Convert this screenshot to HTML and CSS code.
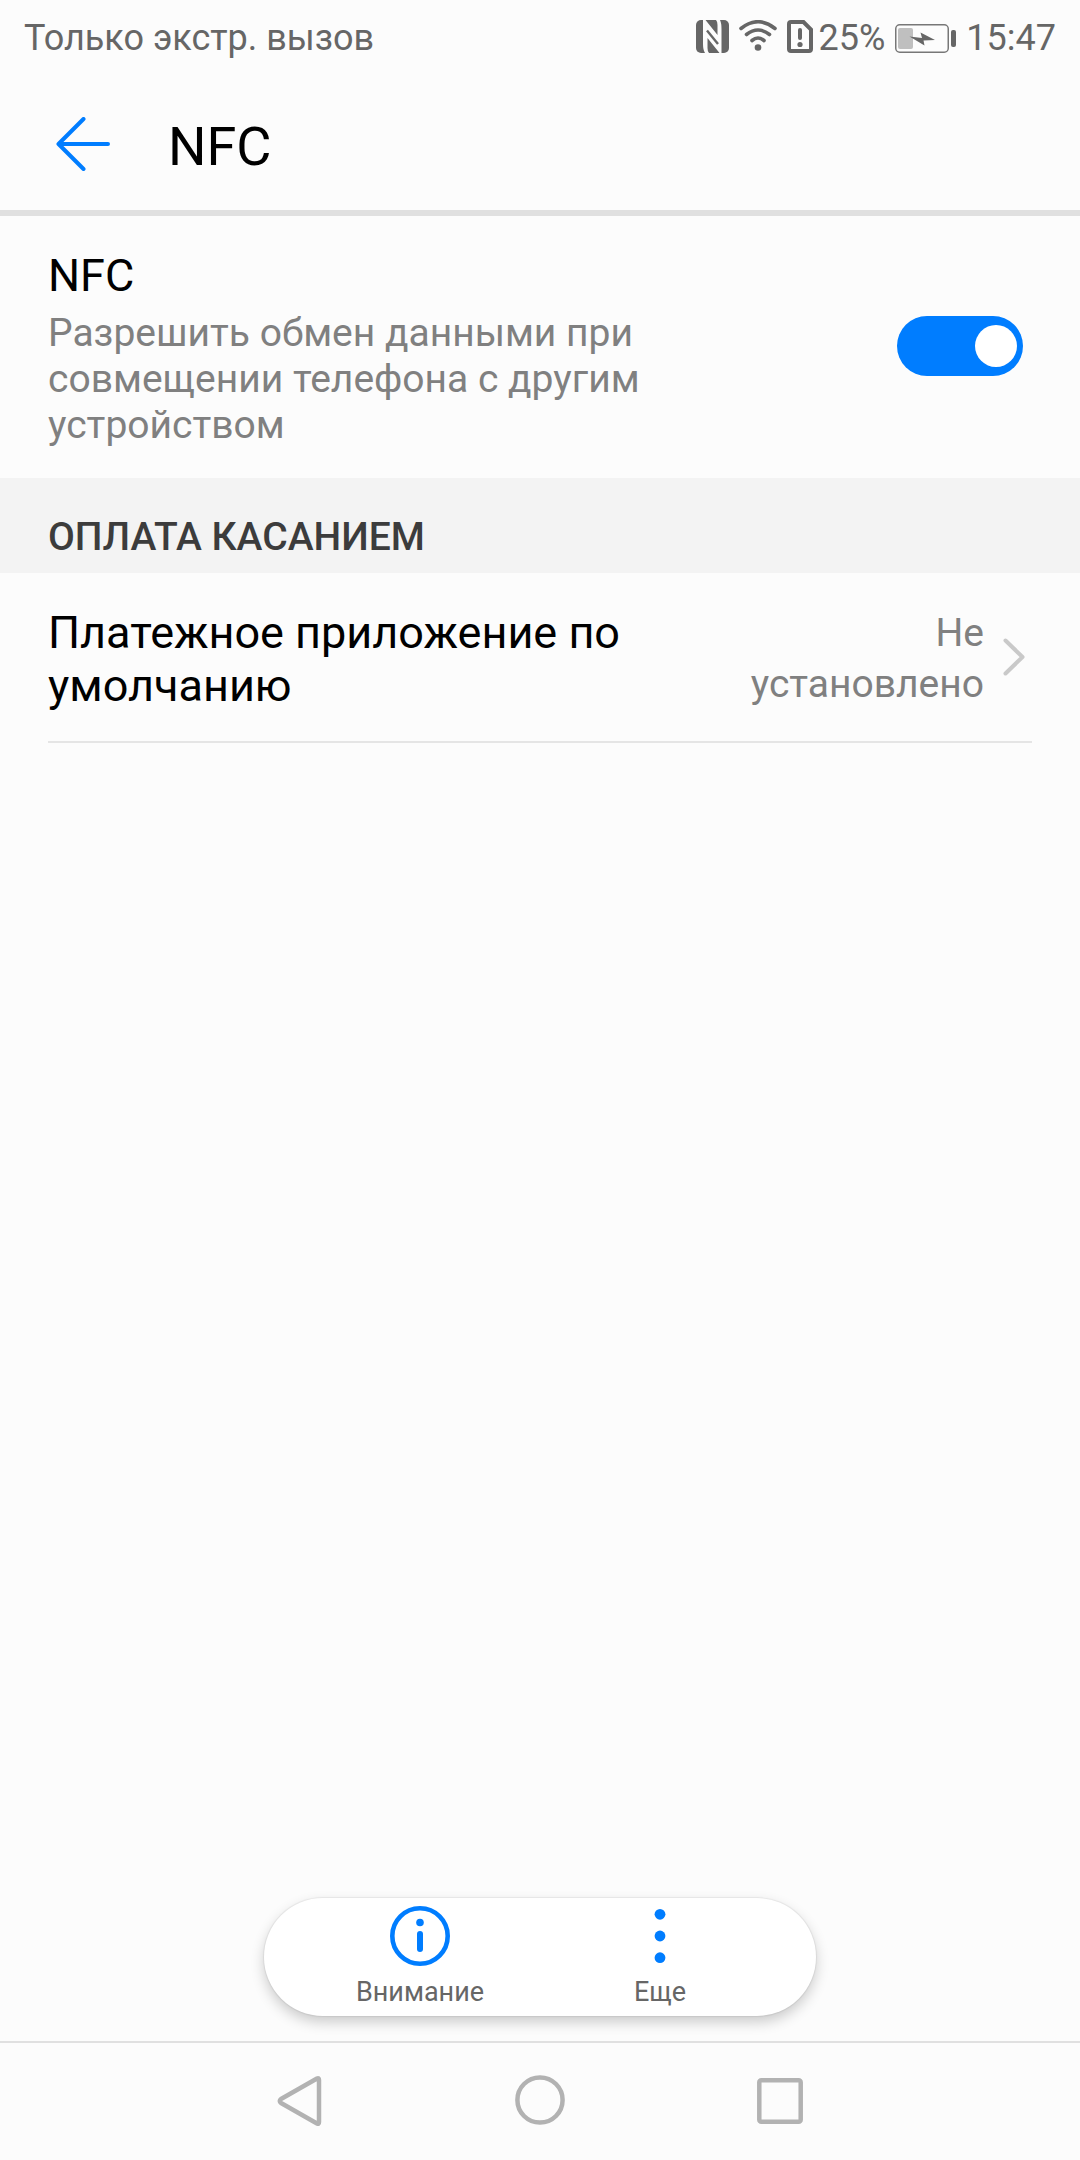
FILE: index.html
```html
<!DOCTYPE html>
<html lang="ru">
<head>
<meta charset="utf-8">
<meta name="viewport" content="width=device-width, initial-scale=1">
<title>NFC</title>
<link rel="stylesheet" href="styles.css">
</head>
<body>
<div class="status">
  <span class="carrier">Только экстр. вызов</span>
  <div class="indicators">
    <svg class="ind-radio" viewBox="0 0 33 33" width="33" height="33" aria-hidden="true">
      <rect width="33" height="33" rx="5" fill="#666"/>
      <path d="M7 0H9.500L21.500 15V5Q21.500 1.500 20 0H24Q25.500 3 25.500 9V33H23.500L11.500 18V28Q11.500 31.500 13 33H9Q7 30 7 24Z" fill="#fcfcfc"/>
      <path d="M11 10.500L22 24" fill="none" stroke="#666" stroke-width="2.400"/>
    </svg>
    <svg class="ind-radio" viewBox="0 0 38 33" width="38" height="33" aria-hidden="true">
      <g fill="none" stroke="#666" stroke-width="3.600" stroke-linecap="round">
        <path d="M2 8.500Q19 -5 36 8.500"/>
        <path d="M7.500 14.500Q19 5.500 30.500 14.500"/>
        <path d="M13 20.500Q19 15.500 25 20.500"/>
      </g>
      <circle cx="19" cy="27.500" r="3.300" fill="#666"/>
    </svg>
    <svg class="ind-radio ind-sim" viewBox="0 0 26 33" width="26" height="33" aria-hidden="true">
      <path d="M4 2H16.500L24 9.500V29Q24 31 22 31H4Q2 31 2 29V4Q2 2 4 2Z" fill="none" stroke="#666" stroke-width="4"/>
      <path d="M13 10V18" stroke="#666" stroke-width="4" stroke-linecap="round"/>
      <circle cx="13" cy="24.500" r="2.600" fill="#666"/>
    </svg>
    <span class="percent">25%</span>
    <svg viewBox="0 0 61 29" width="61" height="29" aria-hidden="true">
      <rect x="0.750" y="0.750" width="52.500" height="27.500" rx="4" fill="none" stroke="#777" stroke-width="1.500"/>
      <rect x="3" y="4" width="15" height="21" rx="2" fill="#bfbfbf"/>
      <path d="M14.500 12.500L27 14L25.500 8.500L40 16L28.500 16.500L29.500 21.500Z" fill="#666"/>
      <rect x="56" y="6" width="5" height="17" rx="2" fill="#666"/>
    </svg>
    <span class="clock">15:47</span>
  </div>
</div>

<header class="header">
  <button class="back" type="button" aria-label="Назад">
    <svg viewBox="0 0 54 54" width="54" height="54" aria-hidden="true">
      <path d="M27.500 2L2.500 27L27.500 52M3 27H52" fill="none" stroke="#007dff" stroke-width="4" stroke-linecap="round" stroke-linejoin="round"/>
    </svg>
  </button>
  <h1 class="title">NFC</h1>
</header>

<main class="main">
  <div class="row">
    <label class="row-text" for="nfc">
      <span class="row-title">NFC</span>
      <span class="row-note">Разрешить обмен данными при совмещении телефона с другим устройством</span>
    </label>
    <input class="switch" type="checkbox" role="switch" id="nfc" checked>
  </div>

  <h2 class="section">ОПЛАТА КАСАНИЕМ</h2>

  <a class="row row-link" href="#payment">
    <span class="row-title link-title">Платежное приложение по умолчанию</span>
    <span class="row-value">Не установлено</span>
    <svg class="chevron" viewBox="0 0 22 38" width="22" height="38" aria-hidden="true">
      <path d="M2.500 2.500L19.500 19L2.500 35.500" fill="none" stroke="#c9c9c9" stroke-width="4" stroke-linecap="round" stroke-linejoin="round"/>
    </svg>
  </a>

  <div class="toolbar">
    <button class="tool" type="button">
      <svg viewBox="0 0 60 60" width="60" height="60" aria-hidden="true">
        <circle cx="30" cy="30" r="27.700" fill="none" stroke="#007dff" stroke-width="4.600"/>
        <circle cx="30" cy="16.500" r="3.800" fill="#007dff"/>
        <path d="M30 28V43" stroke="#007dff" stroke-width="6" stroke-linecap="round"/>
      </svg>
      <span>Внимание</span>
    </button>
    <button class="tool" type="button">
      <svg viewBox="0 0 60 60" width="60" height="60" aria-hidden="true">
        <g fill="#007dff"><circle cx="30" cy="8.300" r="5.400"/><circle cx="30" cy="30" r="5.400"/><circle cx="30" cy="51.700" r="5.400"/></g>
      </svg>
      <span>Еще</span>
    </button>
  </div>
</main>

<nav class="nav">
  <button class="nav-key" type="button" aria-label="Назад">
    <svg viewBox="0 0 52 52" width="52" height="52" aria-hidden="true">
      <path d="M43 3.500Q45 2.500 45 5V47Q45 49.500 43 48.500L7 28Q4.500 26 7 24Z" fill="none" stroke="#b2b2b2" stroke-width="4.500" stroke-linejoin="round"/>
    </svg>
  </button>
  <button class="nav-key" type="button" aria-label="Главный экран">
    <svg viewBox="0 0 52 52" width="52" height="52" aria-hidden="true">
      <circle cx="26" cy="25" r="22.600" fill="none" stroke="#b2b2b2" stroke-width="4.500"/>
    </svg>
  </button>
  <button class="nav-key" type="button" aria-label="Недавние">
    <svg viewBox="0 0 52 52" width="52" height="52" aria-hidden="true">
      <rect x="5.300" y="5.300" width="41.400" height="41.400" rx="2" fill="none" stroke="#b2b2b2" stroke-width="4.500"/>
    </svg>
  </button>
</nav>
</body>
</html>
```
FILE: styles.css
```css
* {
  box-sizing: border-box;
}

body {
  margin: 0;
  min-height: 100vh;
  display: flex;
  flex-direction: column;
  background: #fcfcfc;
  color: #000;
  font-family: Roboto, "Noto Sans", sans-serif;
}

button {
  margin: 0;
  padding: 0;
  border: 0;
  background: none;
  font: inherit;
  cursor: pointer;
}

svg {
  display: block;
  flex: none;
}

/* Status bar */
.status {
  display: flex;
  justify-content: space-between;
  align-items: center;
  padding: 16px 24px;
  font-size: 36px;
  line-height: 44px;
  color: #666;
}

.indicators {
  display: flex;
  align-items: center;
  gap: 10px;
}

.ind-radio {
  margin-bottom: 3px;
}

.ind-sim {
  margin-right: -4px;
}

/* Header */
.header {
  display: flex;
  align-items: center;
  gap: 58px;
  padding: 35px 56px 34px;
  border-bottom: 6px solid #e0e0e0;
}

.title {
  margin: 0;
  padding-top: 6px;
  font-size: 54px;
  font-weight: 400;
  line-height: 59px;
}

/* Settings list */
.main {
  flex: 1;
  display: flex;
  flex-direction: column;
}

.row {
  display: flex;
  align-items: center;
  padding: 28px 57px 30px 48px;
}

.row-text {
  flex: 1;
  display: flex;
  flex-direction: column;
  gap: 8px;
  padding: 5px 200px 0 0;
}

.row-title {
  font-size: 45px;
  line-height: 53px;
}

.row-note {
  font-size: 39px;
  line-height: 46px;
  color: #808080;
}

.switch {
  appearance: none;
  flex: none;
  display: flex;
  justify-content: flex-start;
  align-items: center;
  width: 126px;
  height: 60px;
  margin: 0;
  padding: 0 6px;
  border-radius: 30px;
  background: #bfbfbf;
}

.switch::before {
  content: "";
  width: 42px;
  height: 42px;
  border-radius: 50%;
  background: #fff;
}

.switch:checked {
  justify-content: flex-end;
  background: #007dff;
}

.section {
  margin: 0;
  padding: 36px 48px 13px;
  background: #f3f3f3;
  font-size: 39px;
  font-weight: 500;
  line-height: 46px;
  color: #3c3c3c;
}

.row-link {
  margin: 0 48px;
  padding: 33px 7px 29px 0;
  border-bottom: 2px solid #e5e5e5;
  color: inherit;
  text-decoration: none;
}

.link-title {
  flex: 1;
  padding-right: 48px;
}

.row-value {
  width: 26%;
  font-size: 39px;
  line-height: 51px;
  text-align: right;
  color: #808080;
}

.chevron {
  margin: 0 0 4px 19px;
}

/* Floating toolbar */
.toolbar {
  display: flex;
  align-self: center;
  margin-top: auto;
  margin-bottom: 25px;
  padding: 8px 36px;
  border-radius: 59px;
  background: #fff;
  box-shadow: 0 0 1px 1px rgba(0, 0, 0, 0.06), 0 6px 14px rgba(0, 0, 0, 0.2);
}

.tool {
  display: flex;
  flex-direction: column;
  align-items: center;
  gap: 10px;
  width: 240px;
  font-size: 27px;
  line-height: 32px;
  color: #666;
}

/* System navigation */
.nav {
  display: flex;
  justify-content: center;
  padding: 32px 0 33px;
  border-top: 2px solid #e0e0e0;
}

.nav-key {
  display: flex;
  justify-content: center;
  width: 240px;
}
```
